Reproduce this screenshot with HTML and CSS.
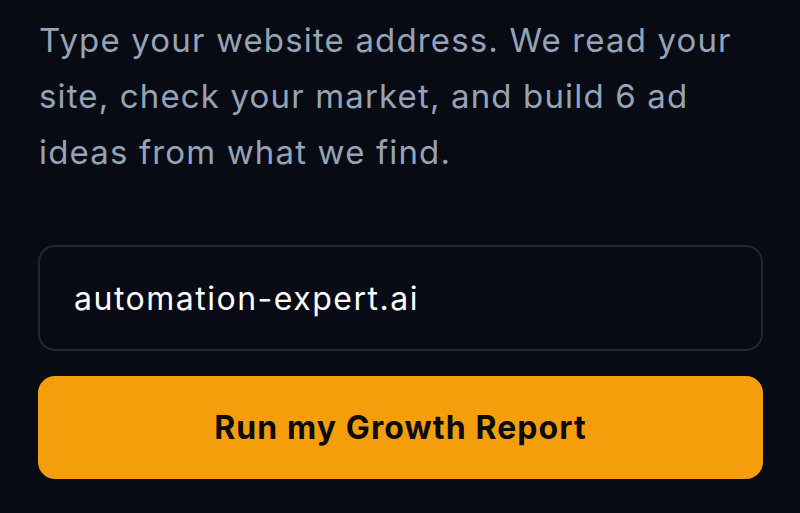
FILE: index.html
```html
<!DOCTYPE html>
<html lang="en">
<head>
<meta charset="utf-8">
<title>Growth Report</title>
<link rel="stylesheet" href="styles.css">
</head>
<body>
<main class="panel">
  <p class="intro">Type your website address. We read your site, check your market, and build 6 ad ideas from what we find.</p>
  <form class="form" onsubmit="return false;">
    <input class="url" type="text" value="automation-expert.ai" aria-label="Website address">
    <button class="cta" type="submit">Run my Growth Report</button>
  </form>
</main>
</body>
</html>
```

FILE: styles.css
```css
html, body {
  margin: 0;
  padding: 0;
  background: #090b14;
  height: 100%;
  overflow: hidden;
}
body {
  font-family: Inter, "Noto Sans", sans-serif;
}
.panel {
  width: 725px;
  margin-left: 38px;
  padding-top: 12px;
}
.intro {
  margin: 0 0 65px 1px;
  font-size: 33px;
  letter-spacing: 1.15px;
  line-height: 56px;
  color: #94a3b8;
  width: 715px;
}
.form {
  display: flex;
  flex-direction: column;
  gap: 25px;
}
.url {
  box-sizing: border-box;
  height: 106px;
  width: 100%;
  margin: 0;
  padding: 0 34px;
  background: #080b15;
  border: 2px solid #1e2738;
  border-radius: 17px;
  color: #ffffff;
  font-family: Inter, "Noto Sans", sans-serif;
  font-size: 32px;
  letter-spacing: 1.5px;
  outline: none;
}
.cta {
  box-sizing: border-box;
  height: 103px;
  width: 100%;
  margin: 0;
  border: none;
  border-radius: 17px;
  background: #f59e0b;
  color: #0b0b0b;
  font-family: Inter, "Noto Sans", sans-serif;
  font-size: 32px;
  letter-spacing: 1.1px;
  font-weight: 700;
  cursor: pointer;
}
```
